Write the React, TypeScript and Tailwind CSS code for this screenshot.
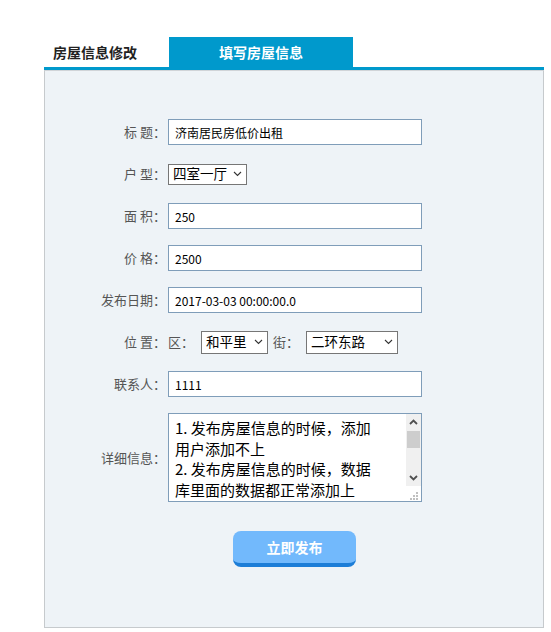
import React from "react";

const font = { fontFamily: '"Microsoft YaHei", "Noto Sans CJK SC", "Noto Sans", sans-serif' };

function Row({ label, children }: { label: string; children: React.ReactNode }) {
  return (
    <div className="flex items-center">
      <div className="w-[121px] shrink-0 text-right text-[13px] text-[#555] whitespace-pre">{label}</div>
      <div className="ml-[2px] flex items-center">{children}</div>
    </div>
  );
}

function Chevron({ up = false, color = "#333" }: { up?: boolean; color?: string }) {
  return (
    <svg width="9" height="6" viewBox="0 0 9 6" className="shrink-0">
      <path d={up ? "M1 5 L4.5 1.5 L8 5" : "M1 1 L4.5 4.5 L8 1"} fill="none" stroke={color} strokeWidth={up || color !== "#333" ? 1.8 : 1.1} />
    </svg>
  );
}

function FakeSelect({ value, w, h }: { value: string; w: string; h: string }) {
  return (
    <div className={`flex ${w} ${h} items-center justify-between border border-[#767676] bg-white pl-[4px] pr-[4px] text-[13.5px] text-black`}>
      <span className="leading-none">{value}</span>
      <Chevron />
    </div>
  );
}

const inputCls = "h-[26px] w-[254px] border border-[#7f9db9] bg-white px-[6px] text-[12px] text-black outline-none";

const lines = ["1. 发布房屋信息的时候，添加", "用户添加不上", "2. 发布房屋信息的时候，数据", "库里面的数据都正常添加上"];

export default function App() {
  return (
    <div className="min-h-[632px] w-[551px] bg-white" style={font}>
      <div className="ml-[44px] w-[500px] pt-[37px]">
        <div className="flex h-[30px] items-stretch">
          <div className="flex w-[125px] items-center pl-[9px] text-[14px] font-bold text-[#222]">房屋信息修改</div>
          <div className="flex w-[184px] items-center justify-center bg-[#0099cc] text-[14px] font-bold text-white">填写房屋信息</div>
        </div>
        <div className="h-[3px] bg-[#0099cc]" />
        <div className="h-[558px] border border-t-[#d0d4d8] border-x-[#c6cacd] border-b-[#c6cacd] bg-[#eef3f7] pt-[48px]">
          <div className="flex flex-col gap-[16px]">
            <Row label="标 题：">
              <input readOnly value="济南居民房低价出租" className={inputCls} />
            </Row>
            <Row label="户 型：">
              <div className="flex h-[26px] items-center">
                <FakeSelect value="四室一厅" w="w-[79px]" h="h-[21px]" />
              </div>
            </Row>
            <Row label="面 积：">
              <input readOnly value="250" className={inputCls} />
            </Row>
            <Row label="价 格：">
              <input readOnly value="2500" className={inputCls} />
            </Row>
            <Row label="发布日期：">
              <input readOnly value="2017-03-03 00:00:00.0" className={inputCls} />
            </Row>
            <Row label="位 置：">
              <div className="flex h-[26px] items-center text-[13px] text-[#555]">
                <span className="w-[33px]">区：</span>
                <FakeSelect value="和平里" w="w-[67px]" h="h-[23px]" />
                <span className="ml-[5px] w-[33px]">街：</span>
                <FakeSelect value="二环东路" w="w-[92px]" h="h-[23px]" />
              </div>
            </Row>
            <Row label="联系人：">
              <input readOnly value="1111" className={inputCls} />
            </Row>
            <Row label="详细信息：">
              <div className="flex h-[89px] w-[254px] border border-[#7f9db9] bg-white">
                <div className="flex-1 overflow-hidden whitespace-pre pl-[6px] pt-[4px] text-[15px] leading-[20.5px] text-black">
                  {lines.map((l) => (
                    <div key={l}>{l}</div>
                  ))}
                </div>
                <div className="flex w-[15px] flex-col">
                  <div className="flex flex-1 flex-col bg-[#f0f0f0]">
                    <div className="flex h-[16px] items-center justify-center">
                      <Chevron up color="#505050" />
                    </div>
                    <div className="mx-[1px] mt-[1px] h-[17px] bg-[#cdcdcd]" />
                    <div className="flex-1" />
                    <div className="flex h-[16px] items-center justify-center">
                      <Chevron color="#505050" />
                    </div>
                  </div>
                  <div className="relative h-[15px] bg-white">
                    <svg width="15" height="15" viewBox="0 0 15 15" className="absolute inset-0">
                      <rect x="10" y="6" width="2" height="2" fill="#c0c0c0" />
                      <rect x="7" y="9" width="2" height="2" fill="#c0c0c0" />
                      <rect x="10" y="9" width="2" height="2" fill="#c0c0c0" />
                      <rect x="4" y="12" width="2" height="2" fill="#c0c0c0" />
                      <rect x="7" y="12" width="2" height="2" fill="#c0c0c0" />
                      <rect x="10" y="12" width="2" height="2" fill="#c0c0c0" />
                    </svg>
                  </div>
                </div>
              </div>
            </Row>
          </div>
          <div className="mt-[29px] flex justify-center pl-[1px]">
            <button className="h-[36px] w-[123px] rounded-[8px] border-b-[4px] border-[#1c7dd7] bg-[#72b9fc] text-[14px] font-bold text-white">
              立即发布
            </button>
          </div>
        </div>
      </div>
    </div>
  );
}
